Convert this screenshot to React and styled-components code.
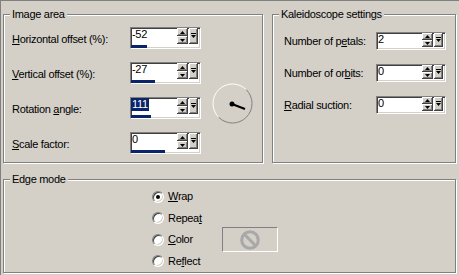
import React from 'react'
import styled, { createGlobalStyle } from 'styled-components'

const GlobalStyle = createGlobalStyle`
  html, body { margin: 0; padding: 0; background: #d4d0c8; }
  body {
    font-family: "Liberation Sans", Arial, sans-serif;
    font-size: 11px;
    letter-spacing: -0.3px;
    color: #000;
  }
`

const Page = styled.div`
  width: 459px;
  height: 275px;
  box-sizing: border-box;
  overflow: hidden;
  background: #d4d0c8;
  border-top: 1px solid #808080;
  border-left: 1px solid #808080;
  padding: 7px 3px 0 2px;
  display: flex;
  flex-direction: column;
  gap: 10px;
`

const TopRow = styled.div`
  display: flex;
  gap: 9px;
`

// etched group box
const Group = styled.fieldset`
  margin: 0;
  padding: 0;
  min-width: 0;
  width: ${p => p.$w}px;
  box-sizing: border-box;
  border: 1px solid #808080;
  box-shadow: inset 1px 1px 0 #fff, 1px 1px 0 #fff;
`

const Legend = styled.legend`
  margin-left: 6px;
  padding: 0 2px;
  line-height: 13px;
  background: #d4d0c8;
`

const ImageGrid = styled.div`
  display: grid;
  grid-template-columns: 118px 71px 52px;
  grid-template-rows: repeat(4, 22px);
  row-gap: 13px;
  padding: 6px 0 8px 8px;
  align-items: center;
`

const KaleidoGrid = styled.div`
  display: grid;
  grid-template-columns: 92px 70px;
  grid-auto-rows: 18px;
  row-gap: 14px;
  padding: 11px 0 0 11px;
  align-items: center;
`

const EdgeGrid = styled.div`
  display: grid;
  grid-template-columns: 70px 56px;
  grid-template-rows: repeat(4, 21.5px);
  padding: 0 0 0 148px;
  align-items: center;
`

const Label = styled.label`
  grid-column: 1;
  line-height: 13px;
  white-space: nowrap;
  padding-top: ${p => (p.$low ? 3 : 0)}px;
`

const Key = styled.span`
  text-decoration: underline;
`

// spin box with dropdown button
const Spin = styled.div`
  grid-column: 2;
  display: flex;
  box-sizing: border-box;
  width: ${p => p.$w}px;
  height: ${p => p.$h}px;
  background: #fff;
  border: 1px solid;
  border-color: #808080 #fff #fff #808080;
  box-shadow: inset 1px 1px 0 #404040, inset -1px -1px 0 #d4d0c8;
  padding-right: 2px;
`

const Field = styled.div`
  flex: 1;
  min-width: 0;
  display: flex;
  flex-direction: column;
  justify-content: space-between;
  align-items: flex-start;
`

const Value = styled.span`
  line-height: 13px;
  padding: 0 1px;
  background: ${p => (p.$sel ? '#0a246a' : 'transparent')};
  color: ${p => (p.$sel ? '#fff' : '#000')};
`

const Bar = styled.span`
  height: 3px;
  background: #0a246a;
`

const Buttons = styled.div`
  display: flex;
  gap: 1px;
  align-self: flex-start;
`

const Stack = styled.div`
  display: flex;
  flex-direction: column;
  width: 11px;
`

const Btn = styled.div`
  box-sizing: border-box;
  width: ${p => p.$w || 11}px;
  height: ${p => p.$h}px;
  background: #d4d0c8;
  display: flex;
  align-items: center;
  justify-content: center;
  box-shadow: inset -1px -1px 0 #404040, inset 1px 1px 0 #fff, inset -2px -2px 0 #808080;
`

const DialBox = styled.svg`
  grid-column: 3;
  grid-row: 3;
  align-self: start;
  margin: -14px 0 0 11px;
`

const Radio = styled.div`
  display: flex;
  align-items: center;
  gap: 4px;
  grid-column: 1;
  line-height: 13px;
`

const RadioDot = styled.span`
  width: 12px;
  height: 12px;
  flex: none;
  box-sizing: border-box;
  border-radius: 50%;
  background: #fff;
  border: 1px solid;
  border-color: #808080 #fff #fff #808080;
  box-shadow: inset 1px 1px 0 #404040, inset -1px -1px 0 #d4d0c8;
  display: flex;
  align-items: center;
  justify-content: center;
  &::after {
    content: '';
    width: 4px;
    height: 4px;
    border-radius: 50%;
    background: ${p => (p.$on ? '#000' : 'transparent')};
  }
`

const Swatch = styled.div`
  grid-column: 2;
  grid-row: 3;
  width: 56px;
  height: 25px;
  box-sizing: border-box;
  border: 1px solid;
  border-color: #808080 #fff #fff #808080;
  display: flex;
  align-items: center;
  justify-content: center;
`

const Arrow = ({ up }) => (
  <svg width="5" height="3" viewBox="0 0 5 3">
    <path d={up ? 'M2.5 0L5 3H0z' : 'M0 0h5L2.5 3z'} fill="#000" />
  </svg>
)

const DropIcon = () => (
  <svg width="5" height="6" viewBox="0 0 5 6">
    <rect x="0" y="0" width="5" height="1" fill="#000" />
    <path d="M0 2h5L2.5 5z" fill="#000" />
  </svg>
)

const SpinBox = ({ value, bar, sel, tall }) => {
  const h = tall ? 22 : 18
  const bh = tall ? 8 : 7
  return (
    <Spin $w={tall ? 71 : 70} $h={h}>
      <Field>
        <Value $sel={sel}>{value}</Value>
        {bar ? <Bar style={{ width: bar }} /> : null}
      </Field>
      <Buttons>
        <Stack>
          <Btn $h={bh}><Arrow up /></Btn>
          <Btn $h={bh}><Arrow /></Btn>
        </Stack>
        <Btn $w={9} $h={bh * 2}><DropIcon /></Btn>
      </Buttons>
    </Spin>
  )
}

const Dial = () => (
  <DialBox width="41" height="41" viewBox="0 0 41 41">
    <path d="M6.7 34.3A19.5 19.5 0 0 1 34.3 6.7" stroke="#fff" fill="none" />
    <path d="M34.3 6.7A19.5 19.5 0 0 1 6.7 34.3" stroke="#808080" fill="none" />
    <line x1="20" y1="21" x2="33" y2="26" stroke="#000" strokeWidth="2" />
    <circle cx="20" cy="21" r="2.5" fill="#000" />
  </DialBox>
)

const NoSign = () => (
  <svg width="20" height="20" viewBox="0 0 20 20">
    <circle cx="10" cy="10" r="8.3" stroke="#a8a8a8" strokeWidth="3" fill="none" />
    <line x1="4.3" y1="4.3" x2="15.7" y2="15.7" stroke="#a8a8a8" strokeWidth="3" />
  </svg>
)

const App = () => (
  <Page>
    <GlobalStyle />
    <TopRow>
      <Group $w={260}>
        <Legend>Image area</Legend>
        <ImageGrid>
          <Label $low><Key>H</Key>orizontal offset (%):</Label>
          <SpinBox tall value="-52" bar={16} />
          <Label $low><Key>V</Key>ertical offset (%):</Label>
          <SpinBox tall value="-27" bar={24} />
          <Label $low>Rotation <Key>a</Key>ngle:</Label>
          <SpinBox tall sel value="111" bar={20} />
          <Dial />
          <Label $low><Key>S</Key>cale factor:</Label>
          <SpinBox tall value="0" bar={34} />
        </ImageGrid>
      </Group>
      <Group $w={184}>
        <Legend>Kaleidoscope settings</Legend>
        <KaleidoGrid>
          <Label>Number of p<Key>e</Key>tals:</Label>
          <SpinBox value="2" />
          <Label>Number of or<Key>b</Key>its:</Label>
          <SpinBox value="0" />
          <Label><Key>R</Key>adial suction:</Label>
          <SpinBox value="0" />
        </KaleidoGrid>
      </Group>
    </TopRow>
    <Group $w={453}>
      <Legend>Edge mode</Legend>
      <EdgeGrid>
        <Radio><RadioDot $on /><span><Key>W</Key>rap</span></Radio>
        <Radio><RadioDot /><span>Repea<Key>t</Key></span></Radio>
        <Radio><RadioDot /><span><Key>C</Key>olor</span></Radio>
        <Swatch><NoSign /></Swatch>
        <Radio><RadioDot /><span>Re<Key>f</Key>lect</span></Radio>
      </EdgeGrid>
    </Group>
  </Page>
)

export default App
